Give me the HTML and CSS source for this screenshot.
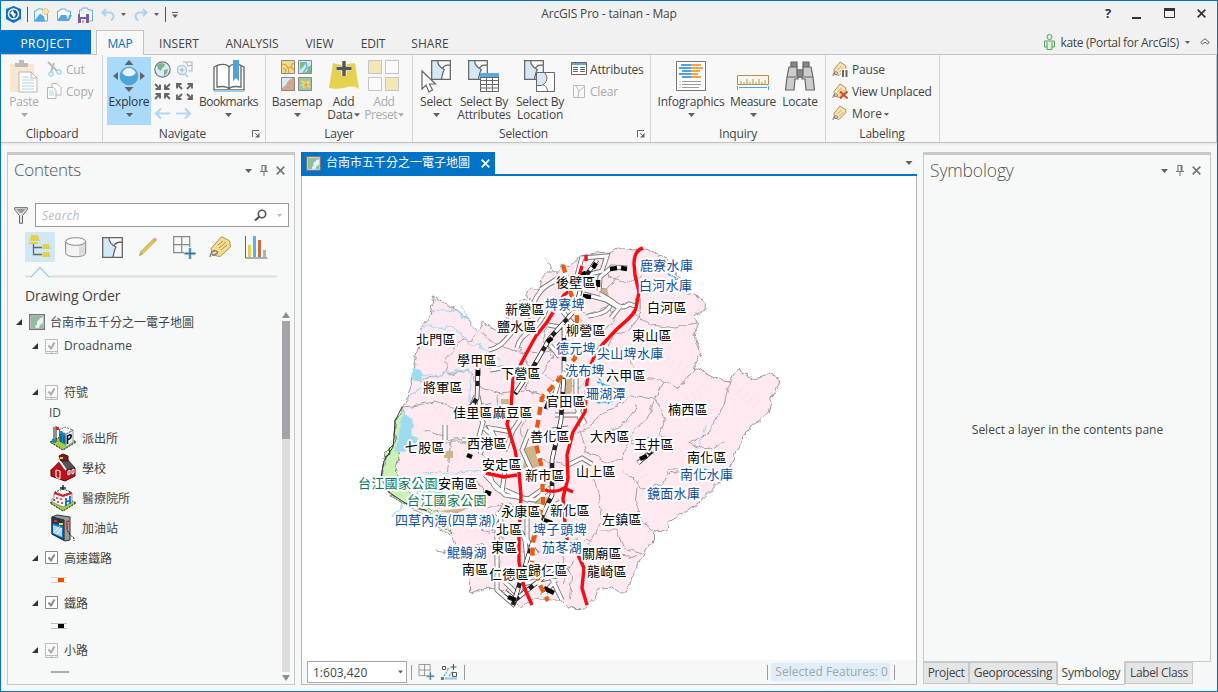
FILE: index.html
```html
<!DOCTYPE html>
<html lang="zh-Hant">
<head>
<meta charset="utf-8">
<title>ArcGIS Pro - tainan - Map</title>
<link rel="stylesheet" href="styles.css">
</head>
<body>
<svg width="0" height="0" class="defs">
  <defs>
    <symbol id="tri" viewBox="0 0 7 4"><path d="M0 0h7L3.5 4z" fill="currentColor"/></symbol>
    <symbol id="pin" viewBox="0 0 8 11"><path d="M2 .5h4v6H2zM5.2 1v5M0 6.5h8M4 7v4" fill="none" stroke="currentColor" stroke-width="1.1"/></symbol>
    <symbol id="x" viewBox="0 0 9 9"><path d="M.7.7l7.6 7.6M8.3.7L.7 8.3" stroke="currentColor" stroke-width="1.7"/></symbol>
    <symbol id="launch" viewBox="0 0 8 8"><path d="M.5 7V.5H7M3 3l3.500 3.500" fill="none" stroke="#666"/><path d="M7.500 3v4.500H3z" fill="#666"/></symbol>
    <symbol id="tag" viewBox="0 0 16 16"><path d="M2 8.500L8 1l5.500 3.500.5 3L7 14.500 2.500 13z" fill="#f6e6b4" stroke="#b28f58"/><path d="M5.500 9l4-4M7.500 11l4-4" stroke="#c4a56b"/><path d="M1 15c0-3 2-5 4-4s0 3-3 2" fill="none" stroke="#777"/></symbol>
    <symbol id="check" viewBox="0 0 14 16"><path d="M.5 1.500h12v12H.5z" fill="#fff" stroke="currentColor"/><path d="M3.500 7.500L6 10.500l3.500-6" fill="none" stroke="currentColor" stroke-width="2"/></symbol>
    <symbol id="checkdim" viewBox="0 0 14 16"><path d="M.5 1.500h12v12H.5zM.5 15.500h12M.5 13v2.500M12.500 13v2.500M6.500 13v2" fill="#fafafa" stroke="#bbb"/><path d="M3.500 7.500L6 10.500l3.500-6" fill="none" stroke="#aaa" stroke-width="2"/></symbol>
    <symbol id="mapicon" viewBox="0 0 16 16"><path d="M.7.700h14.600v14.600H.7z" fill="#e7f3f8" stroke="#777" stroke-width="1.400"/><path d="M2 2h12l-1 2h-2l-1 2-2 1v4l-2 1 1 2H2z" fill="#8fbe9c"/><path d="M10 14l1-3 3-2v5z" fill="#8fbe9c"/></symbol>
    <symbol id="parcel" viewBox="0 0 21 21"><path d="M1 1h6c0 5 3 7 7 9-2 3-2 6-3 10H1z" fill="#d3e9f8"/><path d="M.7.700h19.600v19.600H.7zM7 1c0 5 3 7 7 9-2 3-2 6-3 10M12 9c1-3 4-4 8-4" fill="none" stroke="#666" stroke-width="1.300"/></symbol>
    <symbol id="gridplus" viewBox="0 0 23 23"><path d="M.7.700h16v16H.7zM8.700.7v16M.7 8.700h16" fill="none" stroke="#888" stroke-width="1.200"/><path d="M11 11h12v12H11z" fill="#f6f9f8"/><path d="M17 12v11M11.500 17.500h11" stroke="#a9d9f5" stroke-width="3.500"/><path d="M17 12v11M11.500 17.500h11" stroke="#44687f" stroke-width="1.300"/></symbol>
    <symbol id="nwarrow" viewBox="0 0 7 7"><path d="M1 1l5 5M5.500 1H1v4.500" stroke="#666" stroke-width="1.900" fill="none"/></symbol>
    <symbol id="arrow" viewBox="0 0 16 12"><path d="M7 1L2 6l5 5M2 6h14" stroke="#b2d8f0" stroke-width="2.200" fill="none"/></symbol>
    <symbol id="undo" viewBox="0 0 14 13"><path d="M5 1L1.500 4.500 5 8M2 4.500h6c5 0 6 5 2 8" stroke="#afd2eb" stroke-width="2" fill="none"/></symbol>
    <filter id="wiggle" x="-5%" y="-5%" width="110%" height="110%"><feTurbulence type="fractalNoise" baseFrequency=".12" numOctaves="2" seed="4"/><feDisplacementMap in="SourceGraphic" scale="7" xChannelSelector="R" yChannelSelector="G"/></filter>
    <path id="roads" d="M489 350c20-4 18-22 42-30M546 310c-10 25-25 20-29 38M534 302c8-18 22-24 40-23M540 290l18-12 20-1M582 258l25-2-5 15-19 5M577 276l5-19M584 294l22 6 13 8-8 10M600 294l12 7q10 10 17 3l7 2 2 4v-12M627 268l-15-1-12 10-1 14M588 316q18-2 22-10M548 325l30 5-15-18M550 345l8 10 12-6M478 396l4 20 18 2 12-8M476 396l-7 16M490 370l12-2 18 5M445 425v15M462 440h16l5-18-6-8M486 440l-6 14M520 420l-8 12-22-4 10 20M484 428l22 20 8-20M505 470l-3 22q-10-4-12-18M485 475l20 20 30 5 15-12M510 508l20 8M505 490l22 10 20-14M530 430l-8 20 13 28M540 400l15-6 5-18M555 415l22 0 6-16M566 466l16-8 10 6M505 505l-15 25M497 530v60l16 14 10-20 34-8M505 582l15 15M520 530l5 10 2 20M527 510l0 30 10 14M550 575l12 25M556 580l-14 16M578 412l4 14M576 378v28l9 18M552 430l16-2M496 512q10 10 0 22M540 515l10 15"/>
    <path id="rails" d="M597 260l-14 20-8 30-25 28-15 26-20 30M564 325l0 50-3 45-9 40 0 35-14 30-11 35-14 45M478 368l-1 30-10 16M505 592l10 8 45-36M638 463l14-12"/>
  </defs>
</svg>
<div class="window">
  <header class="titlebar">
    <div class="quick">
      <svg width="15" height="17" viewBox="0 0 15 17"><path d="M7.500 0L15 3v10l-7.500 4L0 13V3z" fill="#0872cf"/><circle cx="7.500" cy="8" r="5" fill="#0b5ba8" stroke="#fff" stroke-width="1.500"/><path d="M4 7l3-3 1 3 2 1-2 4-2-3z" fill="#fff"/></svg>
      <i class="vline dark"></i>
      <svg width="17" height="16" viewBox="0 0 17 16"><path d="M1.500 14V4h2l1-2h5l1 2h4v10z" fill="#eef5fa" stroke="#6aaeda"/><path d="M1 14.500l6-8 4 3 1 5z" fill="#55a8de"/><circle cx="12.500" cy="4.500" r="3" fill="#f6e7a8" stroke="#d9b44e" stroke-dasharray="1.500 1"/></svg>
      <svg width="17" height="15" viewBox="0 0 17 15"><path d="M1.500 13V4h2l1-2h5l1 2h4v4" fill="#f7f9fa" stroke="#6aaeda"/><path d="M1 14l4-6h11l-3 6z" fill="#55a8de"/><path d="M10 8h3l-1 5z" fill="#d7ecf8"/></svg>
      <svg width="17" height="16" viewBox="0 0 17 16"><path d="M1.500 8V3h2l1-2h5l1 2h4v11h-3" fill="#eef5fa" stroke="#6aaeda"/><path d="M0 7h11v9H0z" fill="#7b5ba1"/><path d="M2 7h6v3H2zM3 12h5v4H3z" fill="#fff"/><path d="M5 13v3" stroke="#7b5ba1"/></svg>
      <svg width="14" height="13"><use href="#undo"/></svg>
      <svg class="tri near" width="5" height="3"><use href="#tri"/></svg>
      <svg class="flip" width="14" height="13"><use href="#undo"/></svg>
      <svg class="tri" width="5" height="3"><use href="#tri"/></svg>
      <i class="vline dark"></i>
      <svg class="tri" width="6" height="6" viewBox="0 0 6 6"><path d="M0 .5h6" stroke="currentColor"/><path d="M0 2.500h6L3 6z" fill="currentColor"/></svg>
    </div>
    <div class="caption">ArcGIS Pro - tainan - Map</div>
    <div class="winbuttons">
      <b>?</b>
      <svg width="10" height="12"><path d="M0 10h9" stroke="#333" stroke-width="2"/></svg>
      <svg width="11" height="11"><path d="M.5.500h10v9H.5z" fill="none" stroke="#333"/><path d="M0 1.500h11" stroke="#333" stroke-width="3"/></svg>
      <svg width="9" height="9" class="ink"><use href="#x"/></svg>
    </div>
  </header>

  <nav class="tabs">
    <a class="project">PROJECT</a><a class="active">MAP</a><a class="t-insert">INSERT</a><a class="t-analysis">ANALYSIS</a><a class="t-view">VIEW</a><a class="t-edit">EDIT</a><a class="t-share">SHARE</a>
    <div class="user">
      <svg width="11" height="16" viewBox="0 0 11 16"><circle cx="5.500" cy="3" r="2.500" fill="#dff0df" stroke="#5aa05c"/><path d="M.5 7h10v6H8v2.500H3V13H.5zM3 8v5M8 8v5" fill="#dff0df" stroke="#5aa05c"/></svg>
      <span>kate (Portal for ArcGIS)</span>
      <svg class="tri" width="5" height="3"><use href="#tri"/></svg>
      <svg class="collapse" width="10" height="8" viewBox="0 0 10 8"><path d="M.7 4.500L5 .7l4.300 3.800L7.500 6 5 4 2.500 6z" fill="#fff" stroke="#555"/></svg>
    </div>
  </nav>

  <section class="ribbon">
    <div class="group clipboard">
      <div class="tools">
        <div class="big w44 off">
          <svg width="32" height="34" viewBox="0 0 32 34"><path d="M2 4h24v28H2z" fill="#f9e6cf"/><path d="M7 3h4V0h5v3h4v4H7z" fill="#bbb"/><path d="M11 12h12l6 6v14H11z" fill="#fff" stroke="#b5b5b5"/><path d="M23 12v6h6" fill="none" stroke="#b5b5b5"/><path d="M14 17h7M14 20h12M14 23h12M14 26h12M14 29h12" stroke="#a9d4ef"/></svg>
          <span>Paste</span><svg class="tri" width="7" height="4"><use href="#tri"/></svg>
        </div>
        <div class="list off">
          <div><svg width="15" height="16" viewBox="0 0 15 16"><path d="M1 1l9 9M7 2l-3 9" stroke="#bbb" stroke-width="2"/><circle cx="4" cy="13" r="2" fill="none" stroke="#a9d4ef" stroke-width="1.500"/><circle cx="12" cy="11" r="2" fill="none" stroke="#a9d4ef" stroke-width="1.500"/></svg><span>Cut</span></div>
          <div><svg width="15" height="16" viewBox="0 0 15 16"><path d="M5 .5h5l4 4V12H5z" fill="#fff" stroke="#b5b5b5"/><path d="M.5 4.500h6L9 7v8.500H.5z" fill="#fff" stroke="#b5b5b5"/><path d="M2 8h5M2 10h5M2 12h5" stroke="#a9d4ef"/></svg><span>Copy</span></div>
        </div>
      </div>
      <div class="name">Clipboard</div>
    </div>

    <div class="group navigate">
      <div class="tools">
        <div class="big w44 on">
          <svg width="32" height="34" viewBox="0 0 32 34"><path d="M16 0l4.500 5h-9zM16 32l4.500-5h-9zM0 16l5-4v8zM32 16l-5-4v8z" fill="#606469"/><circle cx="16" cy="16" r="9.300" fill="#4ea3d9"/><path d="M9.500 12.500c2-6 11-6 13 0-1 5-12 5-13 0z" fill="#e9f4fb"/></svg>
          <span>Explore</span><svg class="tri" width="7" height="4"><use href="#tri"/></svg>
        </div>
        <div class="navgrid">
          <svg width="17" height="17" viewBox="0 0 17 17"><circle cx="8.500" cy="8.500" r="7.700" fill="#d6ecf8" stroke="#777" stroke-width="1.200"/><path d="M3 4l4-2 4 1-1 3-2 1-1 3-3-2zM10 9l4-1-1 4-3 3z" fill="#7db38a"/></svg>
          <svg width="17" height="17" viewBox="0 0 17 17"><path d="M7 1h9v9h-4M10 1l2 4 4-1" fill="#f4f4f4" stroke="#bbb" stroke-width="1.200"/><circle cx="6" cy="9" r="4.500" fill="#eef6fb" stroke="#a5c9e0" stroke-width="1.300"/><path d="M9 13l3 3M6 6.500v5M3.500 9h5" stroke="#9cc7e3" stroke-width="1.400"/></svg>
          <svg width="17" height="17" viewBox="0 0 17 17"><use href="#nwarrow" width="7" height="7" transform="rotate(180 3.500 3.500)"/><use href="#nwarrow" width="7" height="7" transform="translate(10) rotate(270 3.500 3.500)"/><use href="#nwarrow" width="7" height="7" transform="translate(0 10) rotate(90 3.500 3.500)"/><use href="#nwarrow" width="7" height="7" transform="translate(10 10)"/></svg>
          <svg width="17" height="17" viewBox="0 0 17 17"><use href="#nwarrow" width="7" height="7"/><use href="#nwarrow" width="7" height="7" transform="translate(10) rotate(90 3.500 3.500)"/><use href="#nwarrow" width="7" height="7" transform="translate(0 10) rotate(270 3.500 3.500)"/><use href="#nwarrow" width="7" height="7" transform="translate(10 10) rotate(180 3.500 3.500)"/></svg>
          <svg width="16" height="13"><use href="#arrow"/></svg><svg class="flip" width="16" height="13"><use href="#arrow"/></svg>
        </div>
        <div class="big w66 tight">
          <svg width="32" height="34" viewBox="0 0 32 34"><path d="M1 7l4-2c5-1 9-1 11 2 2-3 7-3 11-2l4 2v23H1z" fill="#fff" stroke="#666" stroke-width="1.300"/><path d="M4 5v22c6-1 10-1 12 2 2-3 6-3 12-2V5M16 7v22" fill="none" stroke="#666" stroke-width="1.300"/><path d="M1 31h30" stroke="#9bcdec" stroke-width="2"/><path d="M20 0h6v21l-3-3-3 3z" fill="#55a3d6"/></svg>
          <span>Bookmarks</span><svg class="tri" width="7" height="4"><use href="#tri"/></svg>
        </div>
      </div>
      <div class="name">Navigate</div><svg class="launch" width="8" height="8"><use href="#launch"/></svg>
    </div>

    <div class="group layer">
      <div class="tools">
        <div class="big w62">
          <svg width="32" height="34" viewBox="0 0 32 34"><path d="M1 1h13v13H1z" fill="#f1dd86"/><path d="M18 1h13v13H18z" fill="#cfe9f4"/><path d="M1 18h13v13H1z" fill="#cfa787"/><path d="M18 18h13v13H18z" fill="#9ec99b"/><path d="M1 4l4 1 2 3 3-1 1-3 3-1M4 13l1-3-3-2M7 8l1 5M10 7l3 3" fill="none" stroke="#dd9c4c" stroke-width="1.200"/><path d="M19 2h6l-2 4-1 1-3 3zM30 5v8h-7l3-2 1-4z" fill="#7db98b"/><path d="M25 2l1 5-4 6" fill="none" stroke="#62b3e4" stroke-width="1.500"/><path d="M1 18h10l-4 3-2 4-4 3z" fill="#d7ebf7"/><path d="M20 20l5 2 4-2-1 5 2 3-5-1-3 2v-3l-3-1 3-1z" fill="#f2d46d"/><path d="M24 23l3 1-1 3-3-1z" fill="#ee9f5a"/><path d="M.5.500h13v13H.5zM17.500.500h13v13h-13zM.5 17.500h13v13H.5zM17.500 17.500h13v13h-13z" fill="none" stroke="#888"/></svg>
          <span>Basemap</span><svg class="tri" width="7" height="4"><use href="#tri"/></svg>
        </div>
        <div class="big w32">
          <svg width="32" height="34" viewBox="0 0 32 34"><path d="M5 3c6 2 10 2 14 1l8-1 4 26c-6-4-11-2-15-1-5 1-11 1-15 0z" fill="#e6d24f"/><path d="M16 1v15M8.500 8.500h15" stroke="#f8f8f8" stroke-width="5"/><path d="M16 1v15M8.500 8.500h15" stroke="#555" stroke-width="3.400"/></svg>
          <span>Add<br>Data <svg class="tri" width="6" height="4"><use href="#tri"/></svg></span>
        </div>
        <div class="big w50 off tight">
          <svg width="32" height="34" viewBox="0 0 32 34"><g stroke="#c4c4c4"><path d="M.5.500h13v13H.5zM17.500 17.500h13v13h-13z" fill="#f3e8b3"/><path d="M17.500.500h13v13h-13zM.5 17.500h13v13H.5z" fill="#fafafa"/></g></svg>
          <span>Add<br>Preset <svg class="tri" width="6" height="4"><use href="#tri"/></svg></span>
        </div>
      </div>
      <div class="name">Layer</div>
    </div>

    <div class="group selection">
      <div class="tools">
        <div class="big w46">
          <svg width="32" height="34" viewBox="0 0 32 34"><svg x="11" y="0" width="20" height="20"><use href="#parcel"/></svg><path d="M2 11v18l4-4 3 7 3.500-2-3-6h6z" fill="#fff" stroke="#666" stroke-width="1.200"/></svg>
          <span>Select</span><svg class="tri" width="7" height="4"><use href="#tri"/></svg>
        </div>
        <div class="big w50">
          <svg width="32" height="34" viewBox="0 0 32 34"><svg x="0" y="0" width="20" height="20"><use href="#parcel"/></svg><path d="M12.500 13.500h18v18h-18z" fill="#fff" stroke="#666"/><path d="M12 13h19v4H12z" fill="#5aa8dc"/><path d="M13 17.500h18M13 20.500h18M13 24.500h18M13 28h18M18.500 18v14M24.500 18v14" stroke="#666"/></svg>
          <span>Select By<br>Attributes</span>
        </div>
        <div class="big w62">
          <svg width="32" height="34" viewBox="0 0 32 34"><svg x="0" y="0" width="20" height="20"><use href="#parcel"/></svg><path d="M12.500 12.500h18v19h-18z" fill="#fff" stroke="#666"/><path d="M12.500 12.500h8c4 5 3 10-3 13h-5z" fill="#d3e9f8" stroke="#666"/><path d="M19 25c3 0 4 4 5 7" fill="none" stroke="#666"/></svg>
          <span>Select By<br>Location</span>
        </div>
        <div class="list">
          <div><svg width="16" height="14" viewBox="0 0 16 14"><path d="M.5.500h15v12H.5z" fill="#fff" stroke="#666"/><path d="M1 1h14v2H1z" fill="#5aa8dc"/><path d="M2 5.500h5M2 7.500h5M2 9.500h5M9 5.500h5M9 7.500h5M9 9.500h5" stroke="#666"/></svg><span>Attributes</span></div>
          <div class="off"><svg width="16" height="13" viewBox="0 0 16 13"><path d="M2.500.5h11v12h-11zM5 1l3 5 5-4M8 6l-1 6" fill="#fafafa" stroke="#bbb"/></svg><span>Clear</span></div>
        </div>
      </div>
      <div class="name">Selection</div><svg class="launch" width="8" height="8"><use href="#launch"/></svg>
    </div>

    <div class="group inquiry">
      <div class="tools">
        <div class="big w80">
          <svg width="32" height="34" viewBox="0 0 32 34"><path d="M1.500 1.500h29v29h-29z" fill="#fdfdfd" stroke="#777"/><path d="M6 5h10M4 8h12M7 11h9M4 14h12M7 17h9" stroke="#4ea3d9" stroke-width="2"/><path d="M16 5h10M16 8h12M16 11h9M16 14h7M16 17h10" stroke="#f0a34b" stroke-width="2"/><path d="M7 21.500h19M7 24.500h19M7 27.500h17M4.500 21.500h1M4.500 24.500h1M4.500 27.500h1" stroke="#999"/></svg>
          <span>Infographics</span><svg class="tri" width="7" height="4"><use href="#tri"/></svg>
        </div>
        <div class="big w44 tight">
          <svg width="32" height="34" viewBox="0 0 32 34"><path d="M.5 15.500h31v9H.5z" fill="#fdf6e8" stroke="#b28f58"/><path d="M4 25v-4M7 25v-3M10 25v-6M13 25v-3M16 25v-6M19 25v-3M22 25v-6M25 25v-3M28 25v-5" stroke="#b28f58"/><path d="M2 27.500h28M.5 26v4M31.500 26v4" stroke="#4ea3d9"/></svg>
          <span>Measure</span><svg class="tri" width="7" height="4"><use href="#tri"/></svg>
        </div>
        <div class="big w50">
          <svg width="32" height="34" viewBox="0 0 32 34"><g stroke="#666" stroke-width="1.200"><path d="M7 2h6v5H7zM19 2h6v5h-6z" fill="#888"/><path d="M5 7h8v3h6V7h8l2 10 1.500 13H22l-1-11h-3v-2h-4v2h-3l-1 11H1.500L3 17z" fill="#ccc"/><path d="M13 10h6v7h-6z" fill="#888"/><path d="M3 17h9M20 17h9"/></g></svg>
          <span>Locate</span>
        </div>
      </div>
      <div class="name">Inquiry</div>
    </div>

    <div class="group labeling">
      <div class="tools">
        <div class="list">
          <div><svg width="16" height="16" viewBox="0 0 16 16"><use href="#tag" width="16" height="16"/><path d="M9 8h7v8H9z" fill="#f8f8f8"/><path d="M11 9v7M14.500 9v7" stroke="#666" stroke-width="2"/></svg><span>Pause</span></div>
          <div><svg width="16" height="16" viewBox="0 0 16 16"><use href="#tag" width="16" height="16"/><path d="M8 8.500l7.500 7M15.500 8.500l-7.500 7" stroke="#cf4c2d" stroke-width="2"/></svg><span>View Unplaced</span></div>
          <div><svg width="16" height="16"><use href="#tag"/></svg><span class="more">More <svg class="tri" width="5" height="3"><use href="#tri"/></svg></span></div>
        </div>
      </div>
      <div class="name">Labeling</div>
    </div>
  </section>

  <main class="work">
    <aside class="pane contents">
      <div class="panehead"><h2>Contents</h2><svg class="tri" width="7" height="4"><use href="#tri"/></svg><svg width="8" height="11"><use href="#pin"/></svg><svg width="9" height="9"><use href="#x"/></svg></div>
      <div class="searchrow">
        <svg width="14" height="17" viewBox="0 0 14 17"><path d="M.7.700h12.600v2L8.500 8.500v7.800h-3V8.500L.7 2.700z" fill="#e5e5e5" stroke="#666"/><path d="M2 2h10L8 6H6z" fill="#999"/></svg>
        <div class="search"><i>Search</i><svg width="13" height="12" viewBox="0 0 13 12"><circle cx="8" cy="5" r="3.700" fill="none" stroke="#555" stroke-width="1.600"/><path d="M5.500 7.500L1 11.500" stroke="#555" stroke-width="2.200"/></svg><svg class="tri faint" width="5" height="3"><use href="#tri"/></svg></div>
      </div>
      <div class="viewbar">
        <span class="sel"><svg width="24" height="24" viewBox="0 0 24 24"><path d="M3 0h7l2 6H1zM1 7h9v2H1zM15 9h6l2 5h-9zM15 17h6l2 5h-9z" fill="#e6cf4b"/><path d="M5.500 9v10.500H14M5.500 12.500H14" fill="none" stroke="#666" stroke-width="1.300"/></svg></span>
        <span><svg width="22" height="21" viewBox="0 0 22 21"><path d="M.7 4v12c0 5 20 5 20 0V4" fill="#f3f3f3" stroke="#888"/><path d="M14 6h6v11l-6 2z" fill="#dcdcdc"/><ellipse cx="10.700" cy="4.500" rx="10" ry="3.800" fill="#fafafa" stroke="#888"/></svg></span>
        <span><svg width="21" height="21"><use href="#parcel"/></svg></span>
        <span><svg width="20" height="20" viewBox="0 0 20 20"><path d="M1.500 18.500l1.500-4L15.500 2l2 2L5 16.500z" fill="#e3c84c" stroke="#b99b3a" stroke-width=".8"/><path d="M15 2l2-1.500 2 2L17.500 4.500z" fill="#e59c94"/><path d="M1 19l1.500-4 2.500 2.500z" fill="#aaa"/></svg></span>
        <span><svg width="23" height="23"><use href="#gridplus"/></svg></span>
        <span><svg width="23" height="22" viewBox="0 0 23 22"><path d="M2 12.500L12.500.7l8 4L21.500 11 11 20.500l-8-1.500z" fill="#f2dc8d" stroke="#b28f58"/><path d="M9 9l5-4M10 12l7-6M12 14l6-5" stroke="#b28f58"/><path d="M1 21c1-5 3-7 6-6s1 4-4 4" fill="none" stroke="#777" stroke-width="1.300"/></svg></span>
        <span><svg width="23" height="23" viewBox="0 0 23 23"><path d="M.5 0v22h22" fill="none" stroke="#666"/><path d="M3 9h3v12H3z" fill="#e6cf4b"/><path d="M8 0h3v21H8z" fill="#5fb0e2"/><path d="M13 4h3v17h-3z" fill="#cf6a49"/><path d="M18 14h3v7h-3z" fill="#93c29b"/></svg></span>
      </div>
      <svg class="pointer" width="254" height="14"><path d="M0 11.500h7M24 11.500h228" stroke="#ddd" stroke-width="2"/><path d="M6 12l9-9.500 9 9.500" fill="none" stroke="#65b2e2"/></svg>
      <h3>Drawing Order</h3>
      <div class="treebox">
        <div class="tree">
          <div class="row h24 root"><i class="twist"></i><svg width="16" height="16"><use href="#mapicon"/></svg><span>台南市五千分之一電子地圖</span></div>
          <div class="row h24 l1"><i class="twist"></i><svg width="14" height="16"><use href="#checkdim"/></svg><span class="latin">Droadname</span></div>
          <div class="row h22"></div>
          <div class="row h24 l1"><i class="twist"></i><svg width="14" height="16"><use href="#checkdim"/></svg><span>符號</span></div>
          <div class="row h19 id">ID</div>
          <div class="row h30 l2"><svg width="28" height="26" viewBox="0 0 28 26"><path d="M1 17l14-7 12 7-13 8z" fill="#a7ca3f" stroke="#111" stroke-dasharray="2 1"/><path d="M10 5l8 5v11l-8-5z" fill="#1689c4"/><path d="M17 9l7-4v12l-7 5z" fill="#e2f0fa" stroke="#8aa"/><path d="M10 5l6-3 8 3-7 4z" fill="#fff" stroke="#555" stroke-dasharray="2 1"/><path d="M5 18V2M7 17V1" stroke="#222"/><path d="M7 2h3v3H7z" fill="#e02020"/><path d="M3 14h4v4l-4-1z" fill="#1689c4"/><path d="M12 9v8M15 11v7" stroke="#063e68"/><path d="M18.500 19v-8l2-1c3-1 2 4-2 5" fill="none" stroke="#000" stroke-width="1.500"/></svg><span>派出所</span></div>
          <div class="row h30 l2"><svg width="28" height="28" viewBox="0 0 28 28"><path d="M2 14l8-7 7 6 9 1v8l-10 5-14-5z" fill="#b7141a" stroke="#500"/><path d="M9 6l8-2 9 10-9 2z" fill="#555" stroke="#222"/><path d="M1 15l9-9 7 10" fill="none" stroke="#fff" stroke-width="2"/><path d="M10 2l4-2 5 2v5h-7z" fill="#8e1216" stroke="#222"/><path d="M7 16l4 1v8l-4-2zM19 17l2-1v4l-2 1zM23 16l2-1v4l-2 1z" fill="#b7141a" stroke="#fff"/><path d="M11 3h3v2h-3z" fill="#f2c230"/></svg><span>學校</span></div>
          <div class="row h30 l2"><svg width="28" height="28" viewBox="0 0 28 28"><path d="M1 19l13-7 13 7-13 8z" fill="#a7ca3f" stroke="#111" stroke-dasharray="2 1"/><path d="M5 10l9-3 9 2v9l-9 5-11-5v-3l2-1z" fill="#f4f6fa" stroke="#89a"/><path d="M6 8l8 3 8-3-8-3z" fill="#fff" stroke="#333" stroke-dasharray="2 1"/><path d="M5 9l9 3 9-3" fill="none" stroke="#d8232a" stroke-width="2"/><path d="M14 1v5M11 4h6" stroke="#222" stroke-width="1.400"/><path d="M4 16h2M8 18h2M7 14h2M11 15h2M12 19h2" stroke="#d8232a" stroke-width="1.500"/><path d="M17 14v8M21 12v8M17 18l4-1.500" stroke="#0f6cc0" stroke-width="1.800"/></svg><span>醫療院所</span></div>
          <div class="row h30 l2"><svg width="28" height="28" viewBox="0 0 28 28"><path d="M3 3l5-2 13 2v23l-5 1L3 20z" fill="#999" stroke="#333"/><path d="M3 3l12 3v20L3 20z" fill="#1778b5" stroke="#123"/><path d="M4 11l9 3v9l-9-4z" fill="#a6d8f5"/><path d="M3 3l12 3v6L3 9z" fill="#24384a"/><path d="M5 6h3v2H5z" fill="#e03030"/><path d="M10 9h4v2h-4z" fill="#cde052"/><path d="M5 18l6-6M8 20l5-6" stroke="#fff"/><path d="M18 9v7M17 8l3-1" stroke="#d22" stroke-width="1.500"/><path d="M18 17c3 1 2 4 7 7v3" fill="none" stroke="#111" stroke-dasharray="2 1"/></svg><span>加油站</span></div>
          <div class="row h30 l1"><i class="twist"></i><svg class="box" width="14" height="16"><use href="#check"/></svg><span>高速鐵路</span></div>
          <div class="row h14 sym"><svg width="16" height="6"><path d="M0 .5h16M0 5.500h16" stroke="#f3cdbb"/><path d="M7 1h6v4H7z" fill="#e85000"/></svg></div>
          <div class="row h32 l1"><i class="twist"></i><svg class="box" width="14" height="16"><use href="#check"/></svg><span>鐵路</span></div>
          <div class="row h14 sym"><svg width="16" height="6"><path d="M0 .5h16M0 5.500h16" stroke="#bbb"/><path d="M7 1h6v4H7z"/></svg></div>
          <div class="row h34 l1"><i class="twist"></i><svg width="14" height="16"><use href="#checkdim"/></svg><span>小路</span></div>
          <div class="row h10 sym"><svg width="18" height="2"><path d="M0 1h18" stroke="#aaa" stroke-width="2"/></svg></div>
        </div>
        <div class="scroll"><svg width="8" height="6"><path d="M0 6h8L4 0z" fill="#8e8e93"/></svg><div class="track"><div class="thumb"></div></div><svg width="8" height="6"><path d="M0 0h8L4 6z" fill="#8e8e93"/></svg></div>
      </div>
    </aside>

    <section class="view">
      <div class="doctabs"><div class="doctab"><svg width="15" height="15"><use href="#mapicon"/></svg><span>台南市五千分之一電子地圖</span><svg width="9" height="9"><use href="#x"/></svg></div><svg class="tri" width="8" height="4"><use href="#tri"/></svg></div>
      <svg class="canvas" viewBox="302 176 614 484" width="614" height="484">
        <g filter="url(#wiggle)" transform="translate(1.5 0)">
          <path class="land" d="M433 296L441 302 453 310 465 317 476 332 481 322 493 331 505 323 508 305 527 298 526 290 531 287 537 291 541 277 546 272 557 272 560 264 568 267 578 257 593 253 610 252 618 247 630 250 643 248 651 253 667 260 672 273 684 280 683 293 697 296 704 304 703 311 693 317 695 325 692 332 694 342 699 355 692 368 703 373 717 380 728 382 733 373 738 368 742 374 753 378 767 374 778 379 777 387 770 397 767 412 757 422 750 425 740 440 733 458 717 483 700 500 685 512 667 522 665 531 652 532 652 540 640 558 633 572 625 592 618 592 610 587 597 589 592 600 583 609 567 608 560 600 547 600 533 598 520 607 510 600 505 588 497 592 487 587 468 593 468 582 473 568 460 553 450 538 438 528 420 513 400 503 386 492 380 475 382 458 392 445 395 420 402 407 410 385 415 355 422 325 430 313z"/>
          <g class="district">
            <path d="M476 332l-5 8-15 2-4 10-8 8 2 12-14 6-20 2M481 332l12 12 25 8 20 2 20-8M447 375l20-5 13 18 20 5 22-3 18 4M403 407l30-5 18 6 22-6 17 2M422 430l30 10 40-2M430 442h40l15 16 22 4M392 485l40-5 40 10M470 475l15 20-15 10M480 510l25-8 15 8M527 298l20 10 18 0 30 30M546 320l-4 20 10 15-12 18M560 300l25 14 20-6M615 330l-10 18 25 10M633 315l16 10 25 3 20-5M630 360l4 18 28 2 15 10 15-20M662 380l-8 18-24-3-12 10-20 10-14 15-18 7M654 398l-10 22-20 20 20 5 10 12M654 398l10 20-6 16 10 8M728 382l-5 20-15 30-20 10 16 8 20-8M604 330l10-12M540 372l20 16 20-2M530 410l-10 20 6 20 17 10 22 5M580 432l4 20 24 10 13-2 6-20 24-3M620 470l15 12 6 8 20-6 6-14 26 0M690 450l-4 22-20 2M636 485l-2 15 5 20 13 10M586 470l10 20 4 30-10 20-30 2M600 530l15 0 7 18 18 5M587 542l10 20 20-7 18 2M527 500l20 5 10-5M480 530l20 5 10 20 24-5 15 5M565 535l-4 25 9 18-2 20M500 560l-6 18M434 550l20 3 30-10"/>
            <path d="M597 255l10 20 15 8 20-10M575 285l30 5 12-15M450 440l-5 30M600 290l10 24 16-12M515 340l14 28-4 22 22 6M496 395l-3 18M640 312l-12 18-20 6M570 560l-9 22M602 432l20-6 14-20M545 260l16 22"/>
          </g>
          <g class="water"><path d="M434 309c10 3 20-2 29 9M420 325c10 2 18 3 28 2s16 20 28 18l23 16M414 374c18 6 38-3 54-5 5 15-3 25 0 42M405 400l10-10 20-3M420 473c30-2 60 3 80-8l26-8M563 335l40 20M705 425l-8 20-10 15M575 390l20-20 20 6M459 305l15 25M465 490l-50 2-25 25"/><path d="M411 367l7 3 3 5-7 6-2-4z" fill="#9bdcf5"/></g>
          <path class="green" d="M402 407l-7 13-1 20-10 15-3 20 6 17 14 11 25 9 25 23-5-14-24-18-20-15-8-17 6-24 7-17z"/>
          <path d="M403 410l8 12 0 12 6 5-14 13-10-2 6-24z" fill="#9cdbf1"/>
        </g>
        <path d="M402 407l-7 14-1 16-1 10-9 14-3 16 6 14 18 12 22 8M393 445l-4 4 1 5-5 3" fill="none" stroke="#333"/>
        <g class="speckle"><path d="M425 325l20 20M430 350l35 20M431 390l40-10M435 410l26 15M578 270l40 10M650 320l35 10M648 350l42 22M670 412l35-24M740 390l20 20M640 470l20 30M585 545l30 28M480 340l35 28M450 460l40-12M590 440l25-20M488 560l-10 20M568 580l24 0"/></g>
        <g fill="#cdb48b"><path d="M525 448l14-4 2 20-8 8-10-4zM563 382l9-6v16l-7 5zM501 399h8v5h-8zM444 451h9v7h-9zM599 291l8-3 2 9-8 3zM534 502l14-5-1 10-10 2zM438 511l30-3-12 6z"/></g>
        <g fill="none" stroke="#24aeea" stroke-width="1.500" stroke-dasharray="3 1 1 1"><path d="M597 382l12 4-8 8 14 7-18 2 5-8M599 378l4 8M608 404l6-10M668 274l10 5-8 2M704 469l6 2M600 350l15 8"/></g>
        <g class="road"><use href="#roads"/></g>
        <g class="roadfill"><use href="#roads"/></g>
        <g class="rail"><use href="#rails"/></g>
        <g class="raildash"><use href="#rails"/></g>
        <path d="M580 275l6-2M593 268l3-5M610 269l7-1M621 268l6 1M598 280l0 7M583 296l8 1M547 342l5-4M544 588l10 5M508 597l8 3M549 401l-3 8M640 459l7-3M544 520l8 3M467 455l5 2M485 492l6 2M478 370l0 6" stroke="#000" stroke-width="4.500"/>
        <g class="freeway"><path d="M586 255v6M582 266l-6 20-12 9-17 27-11 14-10 18-13 25-2 29-4 16 8 26 4 22 2 24-2 42 0 24 5 25 8 18"/><path d="M643 248C636 250 634 256 634 264L635 275 639 292 636 308C634 316 624 322 616 330L602 345C596 352 592 360 590 368L587 382 585 412 573 432 567 455 568 478 563 498 565 522 567 540 578 555 584 568 582 588 587 605M486 473l18 4 13-2M545 490q12 4 22-4M564 488l9 4"/></g>
        <g class="casing"><use href="#hsr"/></g>
        <g class="hsr"><path id="hsr" d="M563 265l14 50-2 43-12 17-21 23-5 30-1 17 6 23 1 34-10 40-1 20 8 23 8 16"/></g>
        <g class="labels">
          <text x="556" y="287">後壁區</text><text x="505" y="314">新營區</text><text x="497" y="331">鹽水區</text><text x="566" y="335">柳營區</text><text x="647" y="312">白河區</text><text x="632" y="340">東山區</text><text x="416" y="344">北門區</text><text x="457" y="365">學甲區</text><text x="501" y="378">下營區</text><text x="606" y="380">六甲區</text><text x="423" y="392">將軍區</text><text x="546" y="406">官田區</text><text x="668" y="414">楠西區</text><text x="453" y="417">佳里區</text><text x="493" y="417">麻豆區</text><text x="530" y="441">善化區</text><text x="590" y="441">大內區</text><text x="405" y="452">七股區</text><text x="467" y="448">西港區</text><text x="634" y="449">玉井區</text><text x="687" y="462">南化區</text><text x="482" y="469">安定區</text><text x="525" y="480">新市區</text><text x="576" y="476">山上區</text><text x="438" y="488">安南區</text><text x="501" y="516">永康區</text><text x="550" y="515">新化區</text><text x="602" y="524">左鎮區</text><text x="496" y="534">北區</text><text x="491" y="552">東區</text><text x="582" y="558">關廟區</text><text x="462" y="574">南區</text><text x="489" y="579">仁德區</text><text x="528" y="575">歸仁區</text><text x="587" y="576">龍崎區</text>
          <g class="blue"><text x="640" y="270">鹿寮水庫</text><text x="639" y="290">白河水庫</text><text x="545" y="309">埤寮埤</text><text x="556" y="353">德元埤</text><text x="597" y="358">尖山埤水庫</text><text x="565" y="375">洗布埤</text><text x="586" y="398">珊湖潭</text><text x="680" y="479">南化水庫</text><text x="647" y="498">鏡面水庫</text><text x="395" y="525" textLength="101">四草內海(四草湖)</text><text x="533" y="534" textLength="54">埤子頭埤</text><text x="542" y="552">茄苳湖</text><text x="447" y="557">鯤鯓湖</text></g>
          <g class="park"><text x="358" y="488">台江國家公園</text><text x="407" y="505">台江國家公園</text></g>
        </g>
      </svg>
      <div class="status">
        <div class="scale">1:603,420<svg class="tri" width="5" height="4"><use href="#tri"/></svg></div><i class="vline"></i>
        <svg width="17" height="16"><use href="#gridplus"/></svg>
        <svg width="17" height="16" viewBox="0 0 17 16"><path d="M1.500 2.500h3v3h-3zM12.500 0v6M9.500 3h6" fill="none" stroke="#555"/><path d="M3 12l4-6M6 5l3-1M8 12l4-5" stroke="#4ea3d9" stroke-width="1.300" stroke-dasharray="2 1"/><path d="M4 14.500h12" stroke="#8cc6ea" stroke-width="2"/><path d="M11.500 8.500h4v4h-4z" fill="#fff" stroke="#555"/><path d="M0 13h3v3H0z" fill="#3a9a48"/></svg>
        <i class="vline"></i><span class="grow"></span><i class="vline"></i><span class="features">Selected Features: 0</span><i class="vline"></i>
      </div>
    </section>

    <aside class="right">
      <div class="pane symb">
        <div class="panehead"><h2>Symbology</h2><svg class="tri" width="7" height="4"><use href="#tri"/></svg><svg width="8" height="11"><use href="#pin"/></svg><svg width="9" height="9"><use href="#x"/></svg></div>
        <p>Select a layer in the contents pane</p>
      </div>
      <div class="foottabs"><a class="f1">Project</a><a class="f2">Geoprocessing</a><a class="f3 cur">Symbology</a><a class="f4">Label Class</a></div>
    </aside>
  </main>
</div>
</body>
</html>
```
FILE: styles.css
```css
* { box-sizing: border-box; }
body { margin: 0; font: 12px/13px "Open Sans", "Noto Sans CJK TC", sans-serif; letter-spacing: -.2px; color: #444; }
svg { flex: none; overflow: visible; }
svg svg { overflow: hidden; }
i { font-style: normal; }
h2, h3, p { margin: 0; font-weight: 400; }
.defs { position: absolute; }
.window { width: 1218px; height: 692px; border: 1px solid #0173c7; display: flex; flex-direction: column; background: #f6f8f8; overflow: hidden; }
.tri { color: #606060; }
.faint { color: #bbb; }
.ink { color: #333; }
.flip { transform: scaleX(-1); }
.vline { width: 1px; height: 15px; background: #999; }
.vline.dark { background: #555; }

.titlebar { height: 29px; background: #f1f1f1; display: grid; grid-template-columns: 1fr auto 1fr; align-items: center; flex: none; }
.quick { display: flex; align-items: center; gap: 6px; padding: 0 0 2px 5px; height: 26px; }
.quick > svg:nth-child(3) { margin-left: -1px; }
.quick > svg:nth-child(5) { margin-left: -1px; }
.quick .near { margin-right: 2px; }
.caption { color: #444; letter-spacing: -.17px; padding-bottom: 4px; }
.winbuttons { display: flex; justify-content: flex-end; align-items: center; gap: 22px; padding: 0 11px 4px 0; }
.winbuttons b { font-size: 13px; color: #333; margin-right: -1px; }

.tabs { height: 24px; background: #f1f1f1; display: flex; align-items: stretch; flex: none; }
.tabs a { text-align: center; font-size: 12px; line-height: 28px; letter-spacing: -.25px; height: 24px; }
.tabs .project { width: 90px; background: #0173c7; color: #fff; letter-spacing: .45px; }
.tabs .active { margin-left: 5px; width: 48px; height: 25px; color: #0173c7; background: #f8f8f8; border: 1px solid #c3c3c3; border-bottom: 0; line-height: 26px; z-index: 1; margin-bottom: -1px; }
.tabs .t-insert { width: 70px; letter-spacing: .05px; } .tabs .t-analysis { width: 76px; letter-spacing: -.1px; } .tabs .t-view { width: 59px; letter-spacing: -.1px; } .tabs .t-edit { width: 48px; } .tabs .t-share { width: 66px; letter-spacing: .05px; }
.user { margin-left: auto; display: flex; align-items: center; gap: 6px; padding: 0 7px 0 0; letter-spacing: -.35px; }
.user .collapse { margin-left: 4px; }

.ribbon { height: 89px; flex: none; display: flex; border: 1px solid #c3c3c3; border-left: 0; background: #f8f8f8; box-shadow: 0 1px 2px #e3e3e3; }
.group { position: relative; border-right: 1px solid #d4d4d4; display: flex; flex-direction: column; }
.clipboard { width: 102px; padding-left: 1px; } .navigate { width: 163px; padding-left: 4px; } .layer { width: 147px; } .selection { width: 238px; } .inquiry { width: 175px; } .labeling { width: 114px; padding-left: 6px; }
.tools { display: flex; height: 71px; padding-top: 2px; }
.name { text-align: center; line-height: 17px; margin-left: -7px; }
.clipboard .name, .layer .name, .inquiry .name { margin-left: 0; }
.selection .name { margin-left: -16px; }
.launch { position: absolute; right: 5px; bottom: 4px; }
.big { height: 68px; display: flex; flex-direction: column; align-items: center; flex: none; padding-top: 3px; }
.big > svg:first-child { margin-bottom: 1px; }
.big > span { white-space: nowrap; text-align: center; }
.big > .tri { margin-top: 5px; }
.big span .tri { vertical-align: 2px; margin-left: -2px; }
.list .tri { vertical-align: 2px; margin-left: -1px; }
.more { letter-spacing: .1px; }
.tight { letter-spacing: -.45px; }
.on { background: #aadafa; color: #333; }
.off { color: #aaa; } .off .tri { color: #aaa; }
.w32 { width: 31px; } .w44 { width: 44px; } .w46 { width: 46px; } .w50 { width: 50px; } .w62 { width: 62px; } .w66 { width: 67px; } .w80 { width: 80px; }
.list { padding-top: 1px; }
.list > div { height: 22px; display: flex; align-items: center; gap: 4px; white-space: nowrap; }
.selection .list > div { gap: 3px; }
.clipboard .list { padding-left: 1px; }
.navgrid { width: 44px; display: grid; grid-template-columns: 22px 22px; grid-auto-rows: 22px; place-items: center; padding-top: 1px; }

.work { flex: 1; display: flex; padding: 9px 6px 6px; }
.pane { border: 1px solid #c8c8c8; border-top-width: 3px; background: #f6f9f8; }
.panehead { display: flex; align-items: center; height: 31px; gap: 8px; color: #777; padding-right: 9px; }
.panehead h2 { font-size: 17.5px; line-height: 26px; font-weight: 300; flex: 1; letter-spacing: -.15px; color: #555; padding: 0 0 2px 6px; }
.contents { width: 288px; margin-right: 6px; display: flex; flex-direction: column; }
.contents h2 { font-size: 17px; letter-spacing: -.3px; }
.searchrow { display: flex; align-items: center; padding: 0 5px 0 6px; margin-top: 17px; gap: 7px; }
.search { flex: 1; height: 24px; border: 1px solid #999; background: #fff; display: flex; align-items: center; padding: 0 6px; gap: 10px; }
.search i { flex: 1; font-style: italic; color: #bbb; letter-spacing: .3px; }
.viewbar { display: flex; padding: 5px 0 0 17px; gap: 6px; }
.viewbar span { width: 30px; height: 30px; display: flex; align-items: center; justify-content: center; }
.viewbar .sel { background: #cfe7f8; }
.pointer { margin: 3px 0 0 17px; }
h3 { font-size: 14px; line-height: 18px; padding: 8px 0 0 17px; letter-spacing: -.1px; color: #444; }
.treebox { display: flex; flex: 1; margin-top: 5px; overflow: hidden; }
.tree { flex: 1; }
.row { display: flex; align-items: center; }
.row span { margin-left: 5px; letter-spacing: 0; }
.row .latin { letter-spacing: .15px; padding-bottom: 1px; }
.row svg { color: #888; }
.box { color: #777; }
.root { padding-left: 8px; } .l1 { padding-left: 24px; } .l2 { padding-left: 41px; } .id { padding: 0 0 2px 41px; } .sym { padding-left: 43px; }
.twist { width: 0; height: 0; border-left: 6px solid transparent; border-bottom: 6px solid #333; margin-right: 7px; }
.h10 { height: 10px; } .h14 { height: 14px; } .h19 { height: 19px; } .h22 { height: 22px; } .h24 { height: 24px; } .h30 { height: 30px; } .h32 { height: 32px; } .h34 { height: 34px; }
.scroll { width: 8px; margin-right: 4px; display: flex; flex-direction: column; padding: 2px 0 3px; }
.track { flex: 1; background: #dedede; margin: 3px 0; }
.thumb { height: 118px; background: #a3a3a8; }

.view { width: 616px; display: flex; flex-direction: column; margin-right: 6px; }
.doctabs { height: 24px; border-bottom: 2px solid #0173c7; display: flex; justify-content: space-between; align-items: center; padding-right: 4px; flex: none; }
.doctab { width: 194px; height: 22px; background: #0173c7; color: #fff; display: flex; align-items: center; padding: 0 5px; gap: 5px; letter-spacing: 0; }
.doctab span { flex: 1; padding-bottom: 1px; }
.canvas { display: block; background: #fff; box-shadow: -1px 0 #b5b5b5, 1px 0 #b5b5b5; margin-left: 1px; overflow: hidden; }
.status { height: 25px; border: 1px solid #b5b5b5; border-top: 0; display: flex; align-items: center; gap: 6px; padding: 0 21px 0 5px; }
.scale { width: 100px; height: 22px; border: 1px solid #aaa; background: #fff; display: flex; align-items: center; justify-content: space-between; padding: 0 3px 0 5px; letter-spacing: 0; margin-right: -2px; }
.grow { flex: 1; }
.features { background: #dfeefa; color: #a5a5a5; line-height: 18px; padding: 0 2px 0 4px; letter-spacing: .03px; margin: 0 -2px 0 -3px; }

.right { width: 288px; display: flex; flex-direction: column; }
.symb { height: 510px; }
.symb p { text-align: center; margin-top: 237px; padding-left: 1px; letter-spacing: 0; }
.foottabs { display: flex; align-items: flex-start; white-space: nowrap; }
.foottabs a { background: #e4e5e7; border: 1px solid #c8c8c8; height: 22px; line-height: 19px; text-align: center; letter-spacing: -.35px; }
.foottabs .cur { background: #f6f9f8; border-top-color: #f6f9f8; margin-top: -1px; height: 24px; line-height: 22px; }
.f1 { width: 46px; } .f2 { width: 88px; } .foottabs .f3 { width: 68px; letter-spacing: -.25px; } .f4 { width: 68px; }

.land { fill: #ffe9f0; stroke: #999; }
.district { fill: none; stroke: #999; stroke-width: .9; }
.water { fill: none; stroke: #a9dcf2; stroke-width: 1.3; }
.green { fill: #c9f2b4; stroke: #777; stroke-width: .8; }
.speckle { fill: none; stroke: #c9e0ee; stroke-width: 10; stroke-dasharray: 1 6; opacity: .3; }
.road { fill: none; stroke: #777; stroke-width: 5; }
.roadfill { fill: none; stroke: #fff; stroke-width: 3.2; }
.rail { fill: none; stroke: #222; stroke-width: 4.6; }
.raildash { fill: none; stroke: #fff; stroke-width: 3.2; stroke-dasharray: 13 5; }
.freeway { fill: none; stroke: #f70c12; stroke-width: 3.4; stroke-linejoin: round; }
.casing { fill: none; stroke: #fff; stroke-width: 4.5; }
.hsr { fill: none; stroke: #e85b13; stroke-width: 4.4; stroke-dasharray: 8 5; }
.labels { font: 13px "Noto Sans CJK TC", sans-serif; letter-spacing: .3px; fill: #000; stroke: #fff; stroke-width: 4; stroke-linejoin: round; paint-order: stroke; }
.blue { fill: #0c4da2; }
.park { fill: #0d7a55; }
```
